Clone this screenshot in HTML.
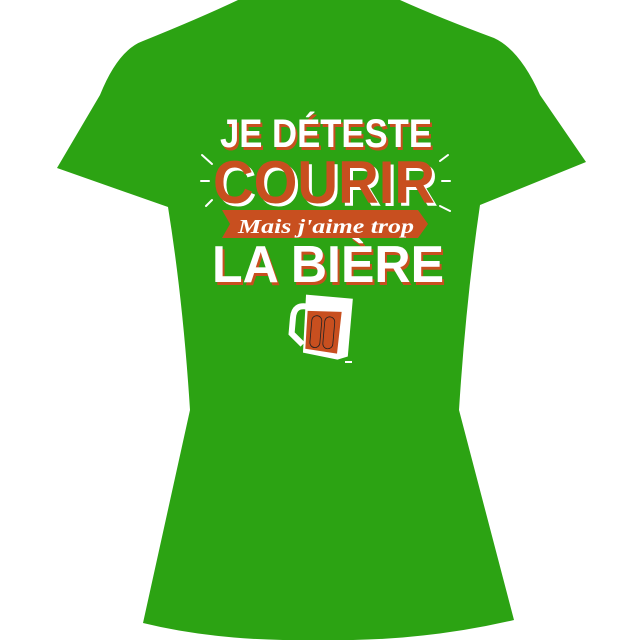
<!DOCTYPE html><html><head><style>
html,body{margin:0;padding:0;background:#fff;width:640px;height:640px;overflow:hidden}
svg{display:block}
.t{font-family:"Liberation Sans",sans-serif;font-weight:bold}
</style></head><body>
<svg width="640" height="640" viewBox="0 0 640 640">
<path d="M238,0 L400,0 Q440,18 494,38 Q520,50 540,95 L586,162 L480,205 Q466,300 459,410 L514,620 Q420,642 320,640 Q220,642 143,623 L190,410 Q183,300 168,207 L57,168 L100,95 Q118,50 143,41 Q200,18 238,0 Z" fill="#2ca313"/>
<g class="t">
<text x="222" y="150" font-size="40" fill="#c84f1f" textLength="212" lengthAdjust="spacingAndGlyphs">JE DÉTESTE</text>
<text x="220" y="147" font-size="40" fill="#fff" textLength="212" lengthAdjust="spacingAndGlyphs">JE DÉTESTE</text>
<text x="216" y="206" font-size="60" fill="#fff" textLength="222" lengthAdjust="spacingAndGlyphs">COURIR</text>
<text x="213" y="203" font-size="60" fill="#c84f1f" textLength="222" lengthAdjust="spacingAndGlyphs">COURIR</text>
<text x="214" y="285" font-size="52" fill="#c84f1f" textLength="232" lengthAdjust="spacingAndGlyphs">LA BIÈRE</text>
<text x="212" y="282" font-size="52" fill="#fff" textLength="232" lengthAdjust="spacingAndGlyphs">LA BIÈRE</text>
</g>
<polygon points="222,210 418,210 428,224 418,238 222,238 230,224" fill="#c84f1f"/>
<text x="238" y="233" font-family="Liberation Serif,serif" font-style="italic" font-weight="bold" font-size="20" fill="#fff" textLength="176" lengthAdjust="spacingAndGlyphs">Mais j'aime trop</text>
<g stroke="#fff" stroke-width="2" stroke-linecap="round">
<line x1="202" y1="155" x2="212" y2="164"/><line x1="201" y1="181" x2="209" y2="181"/><line x1="206" y1="206" x2="212" y2="200"/>
<line x1="448" y1="155" x2="440" y2="161"/><line x1="442" y1="181" x2="450" y2="181"/><line x1="440" y1="206" x2="450" y2="211"/>
</g>
<g transform="rotate(5 320 330)">
<path d="M306,308 Q292,306 292,320 L292,336 L304,346" fill="none" stroke="#fff" stroke-width="6"/>
<polygon points="303,296 350,296 350,354 340,358 305,354" fill="#fff"/>
<polygon points="306,312 340,310 339,352 307,350" fill="#c84f1f"/>
<rect x="311" y="316" width="10" height="32" rx="5" fill="none" stroke="#222" stroke-width="0.8"/>
<rect x="324" y="316" width="10" height="32" rx="5" fill="none" stroke="#222" stroke-width="0.8"/>
</g>
<line x1="345" y1="362" x2="352" y2="362" stroke="#fff" stroke-width="2"/>
</svg>
</body></html>
